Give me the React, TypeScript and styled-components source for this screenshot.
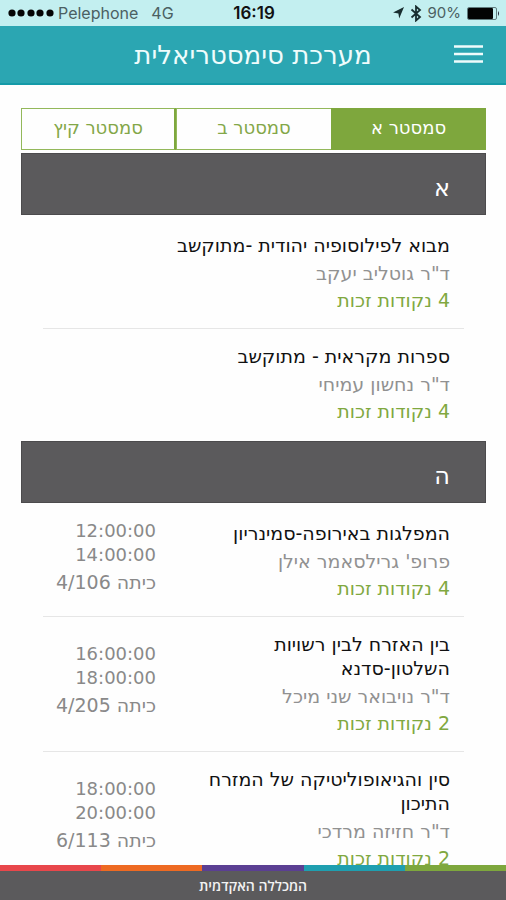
import React, { useState } from "react";
import styled, { createGlobalStyle } from "styled-components";

const GlobalStyle = createGlobalStyle`
  *, *::before, *::after { box-sizing: border-box; }
  body {
    margin: 0;
    background: #fefefe;
    font-family: "DejaVu Sans", "Open Sans", sans-serif;
  }
  button { font-family: inherit; cursor: pointer; }
  h1, h2, h3, p, ul { margin: 0; padding: 0; }
  h1, h2, h3 { font-weight: 400; }
`;

const Screen = styled.div`
  display: flex;
  flex-direction: column;
  height: 100vh;
  overflow: hidden;
`;

const StatusBar = styled.div`
  flex: none;
  display: grid;
  grid-template-columns: 1fr auto 1fr;
  align-items: center;
  height: 26px;
  padding: 0 6px 0 8px;
  background: #c3eff0;
  color: #111;
  font-family: Inter, "Liberation Sans", sans-serif;
  font-size: 16px;
  line-height: 24px;
`;

const StatusGroup = styled.div<{ $end?: boolean }>`
  display: flex;
  align-items: center;
  justify-content: ${(p) => (p.$end ? "flex-end" : "flex-start")};
  gap: ${(p) => (p.$end ? 6 : 4)}px;
  color: #4b6062;
`;

const Network = styled.span`
  margin-left: 9px;
`;

const BatteryLevel = styled.span`
  font-size: 15px;
`;

const Clock = styled.time`
  font-size: 17px;
  font-weight: 600;
`;

const Header = styled.header`
  flex: none;
  display: grid;
  grid-template-columns: 30px 1fr 30px;
  align-items: center;
  height: 59px;
  padding: 0 22px;
  background: #2ba6b2;
  border-bottom: 2px solid #149aa8;
  color: #effcfc;
`;

const PageTitle = styled.h1`
  grid-column: 2;
  text-align: center;
  font-size: 26px;
  line-height: 32px;
`;

const MenuButton = styled.button`
  display: flex;
  padding: 0;
  border: 0;
  background: none;
  color: inherit;
`;

const Content = styled.main`
  flex: 1;
  min-height: 0;
  overflow: hidden;
  padding: 23px 20px 0 21px;
`;

const Tabs = styled.div`
  display: grid;
  grid-template-columns: repeat(3, 1fr);
  margin-bottom: 3px;
`;

const Tab = styled.button<{ $active: boolean }>`
  height: 42px;
  padding: 0 0 2px;
  border: 1px solid #93b85a;
  background: ${(p) => (p.$active ? "#7ea73d" : "#fefefe")};
  border-color: ${(p) => (p.$active ? "#7ea73d" : "#93b85a")};
  color: ${(p) => (p.$active ? "#fff" : "#83a748")};
  font-size: 18px;
  line-height: 24px;

  & + & { border-right-width: 0; }
  &:last-child { border-right: 2px solid #7ea73d; }
`;

const SectionTitle = styled.h2`
  height: 62px;
  padding: 20px 35px 0;
  background: #5b5a5c;
  border: 1px solid #4c4b4d;
  color: #fff;
  font-size: 24px;
  line-height: 28px;
`;

const CourseList = styled.ul`
  padding: 3px 22px 2px;
  list-style: none;
`;

const Course = styled.li`
  display: flex;
  align-items: center;
  justify-content: space-between;
  gap: 48px;
  padding: 15px 14px 14px 0;

  & + & { border-top: 1px solid #e6e6e6; }
`;

const Details = styled.div`
  flex: 1;
`;

const CourseName = styled.h3`
  padding-bottom: 3px;
  color: #111;
  font-size: 19px;
  line-height: 24px;
`;

const Line = styled.p<{ $credit?: boolean }>`
  color: ${(p) => (p.$credit ? "#80a840" : "#919191")};
  font-size: 19px;
  line-height: 27px;
`;

const Schedule = styled.div`
  flex: none;
  width: 113px;
  margin-top: -3px;
  padding-bottom: 8px;
  color: #898989;
  font-size: 18px;
  line-height: 24px;
  white-space: nowrap;
`;

const Hour = styled.time`
  display: block;
`;

const Room = styled.p`
  padding-top: 3px;
  font-size: 19px;
`;

const Footer = styled.footer`
  flex: none;
  background: #5b5a5c;
  color: #f2f2f2;
  text-align: center;
  font-family: "Open Sans", sans-serif;
  font-size: 14px;
  font-weight: 600;
  line-height: 29px;
`;

const Stripes = styled.div`
  display: grid;
  grid-template-columns: repeat(5, 1fr);
  height: 6px;
`;

const Stripe = styled.span<{ $color: string }>`
  background: ${(p) => p.$color};
`;

type CourseData = {
  name: string;
  teacher: string;
  credits: number;
  start?: string;
  end?: string;
  room?: string;
};

const semesters = ["סמסטר א", "סמסטר ב", "סמסטר קיץ"];

const sections: { letter: string; courses: CourseData[] }[] = [
  {
    letter: "א",
    courses: [
      { name: "מבוא לפילוסופיה יהודית -מתוקשב", teacher: "ד\"ר גוטליב יעקב", credits: 4 },
      { name: "ספרות מקראית - מתוקשב", teacher: "ד\"ר נחשון עמיחי", credits: 4 },
    ],
  },
  {
    letter: "ה",
    courses: [
      { name: "המפלגות באירופה-סמינריון", teacher: "פרופ' גרילסאמר אילן", credits: 4, start: "12:00:00", end: "14:00:00", room: "4/106" },
      { name: "בין האזרח לבין רשויות השלטון-סדנא", teacher: "ד\"ר נויבואר שני מיכל", credits: 2, start: "16:00:00", end: "18:00:00", room: "4/205" },
      { name: "סין והגיאופוליטיקה של המזרח התיכון", teacher: "ד\"ר חזיזה מרדכי", credits: 2, start: "18:00:00", end: "20:00:00", room: "6/113" },
    ],
  },
];

const stripeColors = ["#7ea73d", "#1f9fb0", "#5b3f93", "#ee6a22", "#e8474b"];

const SignalDots = () => (
  <svg width="46" height="8" viewBox="0 0 46 8" fill="#050505" aria-hidden="true">
    {[4, 13, 23, 32, 42].map((x) => (
      <circle key={x} cx={x} cy="4" r="3.6" />
    ))}
  </svg>
);

const LocationIcon = () => (
  <svg width="11" height="12" viewBox="0 0 11 12" fill="#182d2f" aria-hidden="true">
    <path d="M11 0 6.2 11.5 5.4 6.4 0 5.5Z" />
  </svg>
);

const BluetoothIcon = () => (
  <svg width="12" height="17" viewBox="0 0 12 17" fill="none" stroke="#182d2f" strokeWidth="1.8" aria-hidden="true">
    <path d="M1.5 4.5 10 12 6 15.5V1.5L10 5 1.5 12.5" />
  </svg>
);

const BatteryIcon = () => (
  <svg width="33" height="13" viewBox="0 0 33 13" aria-hidden="true">
    <rect x="0.5" y="0.5" width="29" height="12" rx="1.5" fill="none" stroke="#617d7f" />
    <rect x="1" y="1" width="25" height="11" rx="1" fill="#030303" />
    <path d="M31 4Q33 6.5 31 9Z" fill="#223" />
  </svg>
);

export default function App() {
  const [active, setActive] = useState(0);

  return (
    <Screen>
      <GlobalStyle />
      <StatusBar>
        <StatusGroup>
          <SignalDots />
          <span>Pelephone</span>
          <Network>4G</Network>
        </StatusGroup>
        <Clock>16:19</Clock>
        <StatusGroup $end>
          <LocationIcon />
          <BluetoothIcon />
          <BatteryLevel>90%</BatteryLevel>
          <BatteryIcon />
        </StatusGroup>
      </StatusBar>

      <Header>
        <PageTitle dir="rtl">מערכת סימסטריאלית</PageTitle>
        <MenuButton type="button" aria-label="תפריט">
          <svg width="29" height="20" viewBox="0 0 29 20" stroke="currentColor" strokeWidth="2.6" aria-hidden="true">
            <path d="M0 1.5H29M0 9H29M0 16.5H29" />
          </svg>
        </MenuButton>
      </Header>

      <Content dir="rtl" lang="he">
        <Tabs role="tablist">
          {semesters.map((label, i) => (
            <Tab key={label} type="button" role="tab" aria-selected={i === active} $active={i === active} onClick={() => setActive(i)}>
              {label}
            </Tab>
          ))}
        </Tabs>

        {sections.map((section) => (
          <section key={section.letter}>
            <SectionTitle>{section.letter}</SectionTitle>
            <CourseList>
              {section.courses.map((course) => (
                <Course key={course.name}>
                  <Details>
                    <CourseName>{course.name}</CourseName>
                    <Line>{course.teacher}</Line>
                    <Line $credit>{course.credits} נקודות זכות</Line>
                  </Details>
                  {course.room && (
                    <Schedule>
                      <Hour>{course.start}</Hour>
                      <Hour>{course.end}</Hour>
                      <Room>כיתה <bdi>{course.room}</bdi></Room>
                    </Schedule>
                  )}
                </Course>
              ))}
            </CourseList>
          </section>
        ))}
      </Content>

      <Footer dir="rtl">
        <Stripes>
          {stripeColors.map((color) => (
            <Stripe key={color} $color={color} />
          ))}
        </Stripes>
        <p>המכללה האקדמית</p>
      </Footer>
    </Screen>
  );
}
